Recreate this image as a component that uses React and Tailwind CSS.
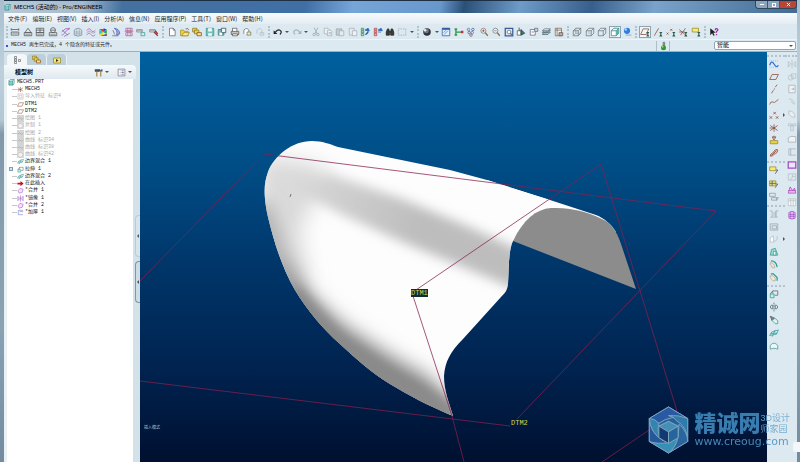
import React from 'react'

const MENUS = [
  '文件(F)', '编辑(E)', '视图(V)', '插入(I)', '分析(A)',
  '信息(N)', '应用程序(P)', '工具(T)', '窗口(W)', '帮助(H)',
]

const K = '#555'
const G = '#b4bec4'
const BR = '#8a4a35'
const PU = '#a04cc8'
const TE = '#2f9c96'
const YE = '#e9d24a'

const sheets = (c) => (
  <>
    <path d="M2 2h6l2 2v7H2z" stroke={c} fill="#eef3f5" />
    <path d="M7 5h5l2 2v7H7z" stroke={c} fill="#eef3f5" />
    <path d="M9 9h4M9 11h4" stroke={c} />
  </>
)
const cube = (fill, c = '#6b7478') => (
  <>
    <path d="M2 6h8v8H2z" stroke={c} fill={fill} />
    <path d="M2 6l4-4h8l-4 4M14 2v8l-4 4" stroke={c} />
  </>
)
const tag = <path d="M10 8h5l-2 3 2 4h-5l2-4z" fill="#2d5a50" />
const magnifier = (
  <>
    <circle cx="7" cy="6" r="4" stroke="#777" fill="#eef5f8" />
    <path d="M10 9l4 5" stroke="#8a6a35" strokeWidth="2" />
  </>
)

const ICONS = {
  ruler: <><path d="M2 2v4M14 2v4M2 4h12M2 8h12v5H2z" stroke={K} /><path d="M5 9v2M8 9v2M11 9v2" stroke={K} /></>,
  angle: <><path d="M8 2L3 9h10zM2 9h12v5H2z" stroke={K} /><path d="M5 11v2M8 11v2M11 11v2" stroke={K} /></>,
  area: <><path d="M2 2h12v7H2zM8 2v7M2 5h12M2 9h12v5H2z" stroke={K} /><path d="M5 11v2M8 11v2M11 11v2" stroke={K} /></>,
  diameter: <><circle cx="8" cy="5" r="4" stroke={K} /><path d="M4 5h8M2 9h12v5H2z" stroke={K} /><path d="M5 11v2M8 11v2M11 11v2" stroke={K} /></>,
  curvature: <><path d="M1 13C6 13 4 7 14 3M1 8l6-5 7-1M5 15l9-5" stroke={PU} /><path d="M2 5l9 8" stroke="#778" /></>,
  mesh: <><path d="M2 5q6-6 12 0v8q-6 3-12 0z" stroke="#78889a" /><path d="M2 8h12M2 11h12M6 3v11M10 3v11" stroke="#9aa6b5" /></>,
  waves: <><path d="M1 6q4-6 7-1t7 0M1 13q4-6 7-1t7 0" stroke="#c05cc0" /><path d="M1 9q4-5 7-1t7 0" stroke="#99a" /></>,
  rainbow: (
    <>
      <path d="M8 8L2 3h7z" fill="#e33" />
      <path d="M8 8l1-6 5 2z" fill="#3a3ae0" />
      <path d="M8 8l6-4v7z" fill="#28a745" />
      <path d="M8 8L2 4v8z" fill="#2ac4d8" />
      <path d="M8 8l-6 5h6z" fill="#e8d22c" />
      <path d="M4 14h10v-3z" fill="#333" />
    </>
  ),
  draft: <><path d="M5 2q6 3 4 11l5-2q0-8-9-9z" stroke="#5560b0" fill="#9fa6e0" /><path d="M2 14h10M3 5l3 7" stroke="#667" /></>,
  section: <><path d="M3 2h10v4H3zM3 9h10v5H3z" stroke="#b455a8" /><path d="M1 7h14M6 2v12M10 2v12" stroke="#a77" /></>,
  layersA: <><path d="M1 4h9v4H1zM1 6h9" stroke="#888" /><path d="M8 9h6v5H8z" stroke={TE} fill="#d9efe8" /></>,
  layersB: <><path d="M1 4h9v4H1zM1 6h9" stroke="#888" /><path d="M8 8l6 6M10 6l4 5" stroke="#9b3030" strokeWidth="2" /></>,
  newFile: <><path d="M4 2h6l3 3v9H4z" stroke="#667" fill="#fff" /><path d="M10 2v3h3" stroke="#667" /></>,
  open: <><path d="M1 5h5l1 2h6v7H1z" stroke="#a58a1c" fill={YE} /><path d="M3 14l3-5h9l-3 5z" stroke="#a58a1c" fill="#f8ec9a" /><path d="M9 3q4-2 5 2" stroke={K} /></>,
  folders: <><path d="M1 2h7v6H1z" stroke="#8f7a20" fill={YE} /><path d="M4 5h7v6H4z" stroke="#8f7a20" fill={YE} /><path d="M8 9h7v5H8z" stroke="#8a4a20" fill="#f3e58b" /></>,
  save: <><path d="M2 2h12v12H2z" stroke="#3d9490" fill="#6fc4bc" /><path d="M5 2h6v5H5zM5 10h6v4H5z" fill="#f4fafa" /></>,
  saveCopy: <><path d="M2 4h9v9H2z" stroke="#3d7480" fill="#7ab9bc" /><path d="M7 2h7v7H7z" stroke="#345" fill="#eef7f7" /><path d="M4 9h4v4H4z" fill="#fff" /></>,
  print: <><path d="M4 7V2h7v5" stroke={K} fill="#fff" /><path d="M2 7h12v5H2z" stroke={K} fill="#c9c4b4" /><path d="M4 11h8v3H4z" stroke={K} fill="#fff" /></>,
  mail: <><path d="M3 11V5q4-5 8 0v6" stroke="#666" fill="#fff" /><path d="M8 8h6v5H8z" stroke="#777" fill="#f5e9b0" /></>,
  mailOff: <><path d="M3 11V5q4-5 8 0v6" stroke={G} /><path d="M8 9h6v4H8z" stroke={G} /></>,
  undo: <><path d="M4 8q5-6 9-1 1 3-2 5" stroke="#222" strokeWidth="2" /><path d="M1 5v6h6z" fill="#222" /></>,
  redo: <><path d="M12 8q-5-6-9-1-1 3 2 5" stroke="#a9b2b8" strokeWidth="2" /><path d="M15 5v6H9z" fill="#a9b2b8" /></>,
  cut: <><path d="M5 1l5 10M11 1L6 11" stroke="#9aa4aa" /><circle cx="5" cy="12" r="2" stroke="#9aa4aa" /><circle cx="11" cy="12" r="2" stroke="#9aa4aa" /></>,
  copy: sheets('#a4adb3'),
  paste: <><path d="M2 3h9v10H2z" stroke="#9aa4aa" fill="#c3ccd1" /><path d="M7 6h7v8H7z" stroke="#a4adb3" fill="#e4ebee" /></>,
  pasteSpecial: <><path d="M2 2h8v11H2z" stroke="#a4adb3" fill="#e4ebee" /><path d="M7 6h7v8H7z" stroke="#a4adb3" fill="#eef3f5" /></>,
  regen: <><path d="M2 2h4v3H2zM2 6h4v3H2zM2 10h4v4H2z" stroke="#3a8d62" fill="#a8dcc0" /><path d="M8 12q6 0 5-6M8 5l5-3 2 4z" stroke="#2a62b5" fill="#2a62b5" /></>,
  regenList: <><path d="M2 2h4v3H2zM2 6h4v3H2zM2 10h4v4H2z" stroke="#b54848" fill="#eab0b0" /><path d="M8 8h5M8 5l5-3 2 4z" stroke="#2a62b5" fill="#2a62b5" /></>,
  find: <><path d="M2 8l2-5h2l1 5v5H2zM9 8l1-5h2l2 5v5H9z" fill="#3a3d33" stroke="#222" /><path d="M7 6h2v3H7z" fill="#222" /></>,
  selectBox: <path d="M2 3h12v10H2z" stroke="#8e989e" strokeDasharray="2 2" />,
  sphere: <><circle cx="8" cy="8" r="6" fill="#2e3338" /><circle cx="7" cy="6" r="4" fill="#70777c" /><circle cx="5" cy="5" r="2" fill="#eceeef" /></>,
  repaint: <><path d="M2 2h12v12H2z" stroke="#2a5ca8" fill="#e7f0fa" /><path d="M5 12l6-6M4 9l4-4" stroke="#4a7cc4" /><path d="M2 3h12" stroke="#2a5ca8" strokeWidth="3" /></>,
  spin: <><path d="M3 3v10M3 8h9" stroke="#3a8a4c" strokeWidth="2" /><path d="M1 2h4v3H1zM1 11h4v3H1z" fill="#31a04c" /><path d="M11 6h4v4h-4z" fill="#c03030" /></>,
  orient: <><circle cx="4" cy="4" r="2" stroke="#667" /><circle cx="11" cy="4" r="2" stroke="#3a60b0" /><circle cx="5" cy="9" r="2" stroke="#3a60b0" /><circle cx="10" cy="9" r="2" stroke="#a55" /><circle cx="8" cy="13" r="2" stroke="#667" /></>,
  zoomIn: <>{magnifier}<path d="M5 6h4M7 4v4" stroke="#a33" /></>,
  zoomOut: <>{magnifier}<path d="M5 6h4" stroke="#777" /></>,
  refit: <><path d="M2 2h12v12H2z" stroke="#3a5c9a" fill="#dde9f7" strokeWidth="2" /><circle cx="8" cy="8" r="3" stroke="#667" fill="#fff" /><path d="M10 10l3 3" stroke="#667" strokeWidth="2" /></>,
  reorient: <><path d="M2 6h6v7H2z" stroke="#456" fill="#fff" /><path d="M8 4l6 6-6 3z" fill="#3b7d5a" stroke="#244" /><path d="M5 1v5" stroke="#333" /></>,
  saved: <><path d="M2 4h8v9H2z" stroke="#667" fill="#fff" /><path d="M9 2h5v5H9zM4 8h4" stroke="#667" fill="#cbd7dc" /></>,
  layers: <><path d="M2 12l4-4h9l-4 4zM2 9l4-4h9l-4 4z" stroke="#567" fill="#9fd8c2" /><path d="M2 6l4-3h9l-4 3z" stroke="#567" fill="#fff" /></>,
  viewMgr: <><path d="M2 2h10v12H2zM5 2v12M2 5h10" stroke="#766b5c" fill="#f3f0e8" /><path d="M8 9h6v5H8z" stroke="#655" fill="#b7b0a0" /></>,
  wire: <>{cube('none')}<path d="M6 2v8h8M6 10l-4 4" stroke="#8b9498" /></>,
  hidden: <>{cube('none')}<path d="M6 6v4h4" stroke="#aab3b7" /></>,
  noHidden: cube('none'),
  shaded: <>{cube('#fff', '#357f7c')}<path d="M10 6l4-4v8l-4 4z" fill="#4fb5a8" /></>,
  realism: <><circle cx="8" cy="6" r="5" fill="#2f7ee0" /><circle cx="6" cy="4" r="2" fill="#a9d2ff" /><path d="M6 13h9" stroke="#9ab8cf" strokeWidth="2" /></>,
  planeOn: <><path d="M1 12L5 3h9l-4 9z" stroke={BR} />{tag}</>,
  axisOn: <><path d="M2 14l7-12" stroke={BR} />{tag}</>,
  pointOn: <><path d="M1 9l3 3M4 9l-3 3M7 3l3 3M10 3L7 6" stroke={BR} />{tag}</>,
  csysOn: <><path d="M2 4l9 8M12 2L4 13M2 8h9" stroke={BR} />{tag}</>,
  noteOn: <><path d="M2 2h10v6H2z" stroke="#9a8a28" fill="#f5ec70" />{tag}</>,
  help: <><path d="M2 2v11l3-3 2 4 2-1-2-4h4z" fill="#222" /><path d="M10 5q0-3 3-2 3 2-1 4v2M12 11v2" stroke="#9a30a0" strokeWidth="2" /></>,
  sketch: <><path d="M1 10q3-9 7-2t7 2" stroke="#2f72d0" strokeWidth="2" /><path d="M1 3h14M1 13h14" stroke="#5a8fd8" strokeDasharray="1 2" /></>,
  plane: <path d="M1 12L5 4h10l-4 8z" stroke={BR} />,
  axis: <path d="M4 15l3-5M8 9l1-2M10 5l3-4" stroke={BR} />,
  curve: <path d="M1 12q2-6 5-4t5-1l4-3" stroke={BR} />,
  points: <path d="M1 10l4 4M5 10l-4 4M7 3l4 4M11 3L7 7M11 10l4 4M15 10l-4 4" stroke={BR} />,
  csys: <path d="M8 2v12M2 4l12 8M14 4L2 12M1 8h9" stroke={BR} />,
  analysis: <><path d="M8 1v4M5 3l3 5 3-5z" stroke={BR} /><path d="M2 9h12v5H2z" stroke="#99851f" fill={YE} /></>,
  graph: <><path d="M2 13q0-4 4-5 3-6 7-6 2 1 0 5-2 2-5 3-2 4-6 3z" stroke={BR} fill="#e6c9a8" /><path d="M4 12l8-8" stroke={BR} /></>,
  note: <><path d="M1 3h10v6H1z" stroke="#9a8a28" fill="#f5ec70" /><path d="M11 8h3l-4 6" stroke="#444" /></>,
  noteMesh: <><path d="M1 3h10v8H1z" stroke="#9a8a28" fill="#e3dc86" /><path d="M1 7h10M5 3v8M11 8h3l-4 6" stroke="#555" /></>,
  noteOff: <><path d="M1 2h9v5H1zM4 9h8v4H4z" stroke="#909a9f" /><path d="M12 9h3l-3 5" stroke="#909a9f" /></>,
  hole: <path d="M1 3h4v10H2M15 3h-4v10h3M5 13h6V3M8 5v6" stroke="#a4adb3" />,
  shell: <path d="M2 3h12v10H2zM5 6h7v5H5z" stroke="#9aa4aa" />,
  rib: <><path d="M2 6l5-3v10H2z" stroke={G} fill="#fff" /><path d="M7 13l6-4V3" stroke={G} /></>,
  draftT: <><path d="M2 13l2-9 6-2 4 11z" stroke={TE} fill="#9bd9cf" /><path d="M7 7h4v6H7z" stroke={TE} fill="#fff" /></>,
  round: <><path d="M3 3q9 0 10 10" stroke={TE} strokeWidth="2" /><path d="M2 6q7 0 7 8H5q0-5-3-5z" stroke="#b0a890" fill="#f2ead0" /></>,
  chamfer: <><path d="M3 3h4l6 6v5" stroke={TE} strokeWidth="2" /><path d="M2 6h4l4 4v4H6l-4-5z" stroke="#b0a890" fill="#f2ead0" /></>,
  extrude: <><path d="M2 8h6v6H2z" stroke={TE} fill="#c9ede5" /><path d="M6 7V3h8v7h-5M2 8l4-5" stroke="#5d676b" /></>,
  revolve: <><path d="M8 1v14" stroke="#556" strokeDasharray="3 1" /><path d="M2 8q1-4 4-3v6q-3 1-4-3zM14 8q-1-4-4-3v6q3 1 4-3z" stroke="#456f6d" /></>,
  sweep: <><path d="M2 2l3 7 4-4z" stroke="#555" fill="#888" /><path d="M5 9l5 5h4V9L9 5z" stroke={TE} fill="#dff2ee" /></>,
  blend: <><path d="M1 12q3-8 8-7l6-2-3 7-6 1z" stroke={TE} /><path d="M5 14l5-11M3 9l10-1" stroke={TE} /></>,
  style: <path d="M2 13V7q6-7 12 0v6q-6-3-12 0z" stroke="#4d9490" fill="#edf8f6" />,
  mirror: <path d="M8 1v14M2 4l4 4-4 5zM14 4l-4 4 4 5z" stroke={G} />,
  merge: <><circle cx="6" cy="9" r="4" stroke={G} /><path d="M7 3h7v7H7z" stroke={G} /></>,
  trim: <path d="M3 2h10v12H3zM7 8h5M10 6v4" stroke="#a4adb3" fill="#eef3f5" />,
  extend: <path d="M3 3q8 0 9 9M6 6l4 5" stroke={G} />,
  offset: <path d="M3 3q9 0 10 10M3 3v6l5 4h5" stroke={G} fill="#e9eff1" />,
  pattern: <path d="M2 3h5v3H2zM9 3h5v3H9zM6 6h4v8H6z" stroke={G} />,
  project: <path d="M2 13V6l4-2h8v9z" stroke="#a4adb3" fill="#eef3f5" />,
  wrap: <path d="M14 3H3v10h11M6 3v10" stroke="#a4adb3" />,
  thicken: <path d="M2 3h12v10H2z" stroke={PU} strokeWidth="2" fill="#f1e3f8" />,
  solidify: <path d="M2 3h12v10H2zM6 13q0-6 7-6M9 4v4" stroke={G} />,
  warp: <path d="M2 13l3-10 4 6 3-4 2 8zM2 9h12" stroke="#b03cc0" fill="#ecc7f2" />,
  table: <path d="M2 3h12v11H2zM2 6h12M6 3v11M10 3v11" stroke="#b8c1c5" fill="#f5f7f6" />,
  cylinder: <><path d="M3 4q5-4 10 0v9q-5 3-10 0z" stroke={PU} fill="#efd6f6" /><path d="M3 7h10M3 10h10M6 3v11M10 3v11" stroke={PU} /></>,
  part: <><path d="M2 4h9v10H2z" stroke="#2c6f6d" fill="#6fd6d0" /><path d="M2 4l3-3h9l-3 3M14 1v9l-3 4" stroke="#2c6f6d" fill="#bdeeea" /></>,
  imported: <path d="M2 2h12v12H2zM5 5h6v6H5z" stroke="#b9b0a6" />,
  greyCurve: <><path d="M0 0h16v16H0z" fill="#d4d4d4" /><path d="M2 10q3-6 6-2t6-1" stroke="#999" /></>,
  greyCopy: <><path d="M0 0h16v16H0z" fill="#dcdcdc" /><path d="M2 10q-1-7 6-7 7 1 6 7l-5 4H5z" stroke="#aaa" fill="#f2f2f2" /></>,
  insertHere: <path d="M1 6h7V2l7 6-7 6v-4H1z" fill="#c01020" />,
  purpleMerge: <path d="M2 9l5-6 7 2-2 7-7 2z" stroke={PU} fill="#f3e2f9" />,
  purpleMirror: <path d="M8 1v14M2 3l5 5-5 5zM14 3L9 8l5 5z" stroke={PU} fill="#f3e2f9" />,
  blueThicken: <path d="M14 3H3v10h11M6 6h8" stroke="#6a68c4" />,
  treeTab: <><path d="M3 1h4v4H3zM3 6h4v4H3zM3 11h4v4H3z" stroke="#555" /><path d="M11 7h4v4h-4z" stroke="#555" /></>,
  favorites: <><path d="M1 4h14v10H1z" stroke="#8a7820" fill="#f3e67a" /><path d="M6 6v6l5-3z" fill="#333" /></>,
  hammer: <><path d="M2 3h7v3H2z" fill="#445a78" stroke="#334" /><path d="M5 6v9M12 6v9" stroke="#a5803a" strokeWidth="2" /><path d="M10 2v3h4V2" stroke="#445" strokeWidth="2" /></>,
  list: <><path d="M2 2h12v12H2z" stroke="#667" fill="#fff" /><path d="M5 5h1M8 5h4M5 8h1M8 8h4M5 11h1M8 11h4" stroke="#447" /></>,
}

function Icon({ name, className = 'size-[10px]' }) {
  return (
    <svg viewBox="0 0 16 16" fill="none" strokeWidth="1.200" className={`block shrink-0 ${className}`} aria-hidden="true">
      {ICONS[name]}
    </svg>
  )
}

function ToolButton({ name, active = false }) {
  return (
    <button
      type="button"
      aria-label={name}
      className={`flex size-[10px] shrink-0 items-center justify-center ${
        active ? 'bg-[#eef6fa] outline outline-[#8fa3b0]' : ''
      }`}
    >
      <Icon name={name} />
    </button>
  )
}

function Arrow() {
  return <span className="h-0 w-0 shrink-0 border-x-2 border-t-2 border-x-transparent border-t-[#4a5358]" />
}

function Grip({ className = 'w-2' }) {
  return (
    <span className={`flex shrink-0 justify-center ${className}`}>
      <span className="h-3 border-l-2 border-dotted border-[#b3c3cd]" />
    </span>
  )
}

function ToolGroup({ items, className }) {
  return (
    <div className={`flex shrink-0 items-center justify-between ${className}`}>
      {items.map((item, i) =>
        item === '>' ? (
          <span key={i} className="flex w-1 justify-center"><Arrow /></span>
        ) : (
          <ToolButton key={i} name={item} active={item === 'shaded' || item === 'planeOn'} />
        )
      )}
    </div>
  )
}

const GROUPS = [
  { width: 'w-[149px]', items: ['ruler', 'angle', 'area', 'diameter', 'curvature', 'mesh', 'waves', 'rainbow', 'draft', 'section', 'layersA', 'layersB'] },
  { width: 'w-[98px]', items: ['newFile', 'open', 'folders', 'save', 'saveCopy', 'print', 'mail', 'mailOff'] },
  { width: 'w-[141px]', items: ['undo', '>', 'redo', '>', 'cut', 'copy', 'paste', 'pasteSpecial', 'regen', 'regenList', 'find', 'selectBox', '>'] },
  { width: 'w-[142px]', items: ['sphere', '>', 'repaint', 'spin', 'orient', 'zoomIn', 'zoomOut', 'refit', 'reorient', 'saved', 'layers', 'viewMgr'] },
  { width: 'w-[60px]', items: ['wire', 'hidden', 'noHidden', 'shaded', 'realism'] },
  { width: 'w-[61px]', items: ['planeOn', 'axisOn', 'pointOn', 'csysOn', 'noteOn'] },
  { width: 'w-[10px]', items: ['help'] },
]

const TREE = [
  ['csys', 'MECH5'],
  ['imported', '导入特征 标识4', true],
  ['plane', 'DTM1'],
  ['plane', 'DTM2'],
  ['greyCurve', '绘图 1', true],
  ['greyCopy', '复制 1', true],
  ['greyCurve', '绘图 2', true],
  ['greyCurve', '曲线 标识34', true],
  ['greyCurve', '曲线 标识38', true],
  ['greyCopy', '曲线 标识42', true],
  ['blend', '边界混合 1'],
  ['extrude', '拉伸 1'],
  ['blend', '边界混合 2'],
  ['insertHere', '在此插入'],
  ['purpleMerge', '*合并 1'],
  ['purpleMirror', '*镜像 1'],
  ['purpleMerge', '*合并 2'],
  ['blueThicken', '*加厚 1'],
]

const SIDE_A = [
  ['sketch', 'plane', 'axis', 'curve', 'points', 'csys', 'analysis', 'graph'],
  ['note', 'noteMesh', 'noteOff'],
  ['hole', 'shell', 'rib', 'draftT', 'round', 'chamfer'],
  ['extrude', 'revolve', 'sweep', 'blend', 'style'],
]
const SIDE_A_HEIGHTS = ['h-[99px]', 'h-[37px]', 'h-[73px]', 'h-[62px]']
const SIDE_B = ['mirror', 'merge', 'trim', 'extend', 'offset', 'pattern', 'project', 'wrap', 'thicken', 'solidify', 'warp', 'table', 'cylinder']

function TitleBar() {
  return (
    <header className="flex h-[13px] shrink-0 items-start justify-between border-t border-[#1d2f45] bg-[linear-gradient(100deg,#b9cbd9_0%,#a4bace_10%,#44719f_15%,#406fa5_38%,#76a5d8_44%,#6797cb_55%,#2b5078_58%,#6e9bc8_65%,#385f8c_74%,#79a3ca_82%,#426a92_100%)]">
      <div className="flex items-center gap-[3px] pt-px">
        <Icon name="part" className="size-[7px]" />
        <h1 className="whitespace-nowrap font-['Roboto','Noto_Sans_CJK_SC',sans-serif] text-[6px] leading-[10px] text-black">
          MECH5 (活动的) - Pro/ENGINEER
        </h1>
      </div>
      <div className="flex h-2 overflow-hidden rounded-b-sm border border-t-0 border-[#30465e] text-white">
        <button type="button" aria-label="最小化" className="flex w-3 items-center justify-center border-r border-[#40566e] bg-[#8ca6bd]">
          <span className="h-px w-1 bg-white" />
        </button>
        <button type="button" aria-label="还原" className="flex w-3 items-center justify-center border-r border-[#40566e] bg-[#8ca6bd]">
          <span className="size-1 border border-white" />
        </button>
        <button type="button" aria-label="关闭" className="flex w-4 items-center justify-center bg-[#bd4433]">
          <svg viewBox="0 0 6 6" className="size-[5px]" stroke="white" strokeWidth="1"><path d="M1 1l4 4M5 1L1 5" /></svg>
        </button>
      </div>
    </header>
  )
}

function SashHandle({ className }) {
  return (
    <button
      type="button"
      aria-label="折叠"
      className={`ml-[2px] flex h-[42px] items-center justify-center rounded-l-sm border border-r-0 ${className}`}
    >
      <span className="h-0 w-0 border-y-2 border-r-2 border-y-transparent border-r-[#44525c]" />
    </button>
  )
}

function ModelTree() {
  return (
    <aside className="flex w-[136px] shrink-0 flex-col bg-[#d3e1e9]">
      <div className="flex h-[13px] items-end pl-[3px] pt-[2px]" role="tablist">
        <button type="button" role="tab" aria-selected="true" aria-label="模型树" className="flex h-full w-5 items-center justify-center rounded-t-sm bg-[#f3f7f9]">
          <Icon name="treeTab" className="size-2" />
        </button>
        <button type="button" role="tab" aria-label="文件夹" className="flex h-full w-5 items-center justify-center rounded-t-sm border-r border-[#eaf2f6] bg-[#bccfda]">
          <Icon name="folders" className="size-[9px]" />
        </button>
        <button type="button" role="tab" aria-label="收藏夹" className="flex h-full w-5 items-center justify-center rounded-t-sm border-r border-[#eaf2f6] bg-[#bccfda]">
          <Icon name="favorites" className="size-2" />
        </button>
      </div>
      <div className="mr-1 flex h-[14px] shrink-0 items-center rounded-tr-sm bg-linear-to-b from-[#f5f9fb] to-[#dfe9ef] pl-[11px] pr-[4px]">
        <h2 className="flex-1 text-[6px] font-bold leading-none">模型树</h2>
        <button type="button" aria-label="设置" className="mr-2 flex items-center gap-[2px]">
          <Icon name="hammer" className="size-[9px]" />
          <Arrow />
        </button>
        <button type="button" aria-label="显示" className="flex items-center gap-[2px]">
          <Icon name="list" className="size-[9px]" />
          <Arrow />
        </button>
      </div>
      <div className="flex min-h-0 flex-1">
        <div className="flex-1 border-l-[3px] border-[#e9f1f5] bg-white">
          <ul className="flex h-[137px] flex-col justify-between font-['Liberation_Mono','Noto_Sans_CJK_SC',monospace] text-[5px] leading-[7px] text-[#111]">
            <li className="flex h-[7px] items-center gap-[2px] whitespace-nowrap pl-px">
              <Icon name="part" className="size-[7px]" />
              MECH5.PRT
            </li>
            {TREE.map(([icon, label, muted], i) => (
              <li key={i} className={`flex h-[7px] items-center whitespace-nowrap pl-[2px] ${muted ? 'text-[#a9a9a9]' : ''}`}>
                <span className="flex w-2 items-center">
                  {label === '拉伸 1' ? (
                    <span className="size-[4px] border border-[#7a9cb8] bg-[#d5e6f2]" />
                  ) : (
                    <span className="ml-[3px] h-px flex-1 bg-[#c8c8c8]" />
                  )}
                </span>
                <Icon name={icon} className="mr-px size-[7px]" />
                {label}
              </li>
            ))}
          </ul>
        </div>
        <div className="flex w-[7px] flex-col gap-1 pt-[136px]">
          <SashHandle className="border-[#b9cbd6] bg-[#d6e4ec]" />
          <SashHandle className="border-[#8196a5] bg-[#cddde6]" />
        </div>
      </div>
    </aside>
  )
}

const BODY =
  'M312 141C322 141 330 144 338 147L450 170L487 180L550 200C530 208 518 228 513 241C508 252 509 270 508 284C507 291 505 293 501 297L463 339C450 352 445 362 444 376C444 391 449 402 453 416C429 406 408 395 390 384C372 373 356 359 340 344C321 327 308 311 295 290C281 266 273 238 268 217C263 194 264 183 268 172C274 156 292 141 312 141Z'

function Viewport() {
  return (
    <main className="min-w-0 flex-1 bg-[linear-gradient(180deg,#00609e_0%,#004d86_28%,#00366a_52%,#002451_76%,#001030_100%)]">
      <svg viewBox="140 52 627 410" preserveAspectRatio="xMidYMid slice" className="block h-full w-full">
        <defs>
          <clipPath id="body"><path d={BODY} /></clipPath>
          <filter id="soft" x="-30%" y="-30%" width="160%" height="160%"><feGaussianBlur stdDeviation="6" /></filter>
          <filter id="wide" x="-30%" y="-30%" width="160%" height="160%"><feGaussianBlur stdDeviation="10" /></filter>
          <linearGradient id="fade" x1="280" y1="185" x2="420" y2="225" gradientUnits="userSpaceOnUse">
            <stop offset="0" stopColor="#dcdcdc" />
            <stop offset="1" stopColor="#bdbdbd" />
          </linearGradient>
        </defs>
        <path d="M487 180L550 200L596 215C604 218 612 225 616 232L560 214L513 241L500 220Z" fill="#fdfdfd" />
        <path d="M513 241C523 220 536 209 551 208C572 207 592 213 606 221C614 227 618 235 621 244L636 289Z" fill="#8c8c8c" />
        <path d={BODY} fill="#fdfdfd" />
        <g clipPath="url(#body)">
          <path d="M255 160L285 158L330 168L300 230L310 290L280 290Z" fill="#dadada" filter="url(#wide)" />
          <path d="M280 183L330 174L400 198L465 225L520 250L520 291L465 268L400 241L345 216Z" fill="url(#fade)" filter="url(#soft)" />
          <path d="M250 200L266 205L281 255L304 290L342 325L388 355L428 378L448 400L462 430L380 415L300 345Z" fill="#808080" filter="url(#wide)" />
          <path d="M290 292C310 318 325 335 342 349L394 385L455 416" stroke="#8b8b8b" strokeWidth="22" fill="none" filter="url(#soft)" />
        </g>
        <path d="M291 194l-1 3" stroke="#777" />
        <g fill="none" stroke="#85204f" strokeWidth="1" strokeOpacity=".75">
          <path d="M140 281L264 154L716 211L517 419" />
          <path d="M413 292L601 164L677 411L602 462" />
          <path d="M413 296L452 416L464 462" />
          <path d="M140 381L510 426" />
        </g>
        <path d="M411 289h17v8h-17z" fill="#0b2d3c" />
        <g className="font-['Liberation_Mono',monospace] text-[7px]" fill="#d3d84a">
          <text x="411" y="295">DTM1</text>
          <text x="511" y="425">DTM2</text>
        </g>
        <text x="144" y="429" fill="#b9c3cc" className="font-['Noto_Sans_CJK_SC',sans-serif] text-[4px]">插入模式</text>
      </svg>
    </main>
  )
}

function SideTools() {
  return (
    <aside className="flex w-[30px] shrink-0 justify-between bg-[#dce9f1] pt-[3px]">
      <div className="flex w-[18px] flex-col gap-[3px]">
        {SIDE_A.map((group, i) => (
          <div key={i} className="flex flex-col gap-[2px]">
            <span className="border-t-2 border-dotted border-[#b3c3cd]" />
            <div className={`flex flex-col justify-between pl-[2px] ${SIDE_A_HEIGHTS[i]}`}>
              {group.map((name, j) => (
                <div key={j} className="flex items-center gap-1">
                  <ToolButton name={name} />
                  {name === 'points' || name === 'rib' ? (
                    <span className="h-0 w-0 border-y-2 border-l-2 border-y-transparent border-l-[#4a5358]" />
                  ) : null}
                </div>
              ))}
            </div>
          </div>
        ))}
      </div>
      <div className="flex h-[165px] w-3 flex-col items-end justify-between border-t-2 border-dotted border-[#b3c3cd] pt-[2px]">
        {SIDE_B.map((name) => <ToolButton key={name} name={name} />)}
      </div>
    </aside>
  )
}

function Watermark() {
  return (
    <div className="pointer-events-none absolute bottom-2 right-[10px] flex items-center gap-1 text-[#3f88bd] opacity-90">
      <svg viewBox="0 0 44 50" className="h-[48px] w-[43px]" fill="none" stroke="#8bb3cc">
        <path d="M22 1l20 12v24L22 49 2 37V13z" fill="#2a6aa8" />
        <path d="M22 1l20 12Q24 9 12 18L2 13z" fill="#2c62ad" />
        <path d="M42 13v24Q42 22 30 15 28 11 22 10q10-1 20 3z" fill="#3487b8" />
        <path d="M42 37L22 49q11-9 11-30 9 8 9 18z" fill="#2d6fa9" />
        <path d="M22 49L2 37q16 3 30-5-2 11-10 17z" fill="#3f9dc4" />
        <path d="M2 37V13q1 14 13 22 4 3 8 3-12 2-21-1z" fill="#2a5fa5" />
        <path d="M2 13q6 0 10 5-3 12 4 18Q3 28 2 13z" fill="#3a90bd" />
        <path d="M22 16l10 5v12l-10 6-10-6V21z" fill="#153f76" />
        <path d="M22 16l10 5-10 6-10-6z" fill="#4d9cc4" />
        <path d="M22 27v12M32 21v12l-10 6V27z" fill="#2b6da9" />
      </svg>
      <div className="font-['Liberation_Sans','Noto_Sans_CJK_SC',sans-serif]">
        <div className="flex items-center">
          <strong className="text-[22px] font-black leading-[22px]">精诚网</strong>
          <span className="text-[9px] leading-[11px] text-[#6ea9cf]">3D设计<br />师家园</span>
        </div>
        <div className="font-['DejaVu_Sans',sans-serif] text-[11px] leading-[13px] text-[#4f93c0]">www.creoug.com</div>
      </div>
    </div>
  )
}

export default function App() {
  return (
    <div className="relative flex h-screen min-h-[400px] w-full flex-col overflow-hidden bg-[linear-gradient(180deg,#a9bfce_0%,#bdd0dc_15%,#b3c7d4_26%,#8299ab_29%,#8aa2b4_70%,#728b9f_100%)] font-['Liberation_Sans','Noto_Sans_CJK_SC',sans-serif] text-black">
      <div className="ml-1 mr-[3px] flex min-h-0 flex-1 flex-col bg-[#dce9f1]">
        <TitleBar />
        <nav className="flex h-[11px] shrink-0 items-center gap-[5px] bg-linear-to-b from-[#f6fafc] to-[#e4edf3] pl-1">
          {MENUS.map((menu) => (
            <button key={menu} type="button" className="whitespace-nowrap font-['Noto_Sans_CJK_SC',sans-serif] text-[6px] leading-none text-[#222]">
              {menu}
            </button>
          ))}
        </nav>
        <div className="flex h-4 shrink-0 items-center border-b border-[#eef5f9]">
          {GROUPS.map((group, i) => (
            <React.Fragment key={i}>
              <Grip className={i === 0 ? 'w-[6px]' : 'w-2'} />
              <ToolGroup items={group.items} className={group.width} />
            </React.Fragment>
          ))}
        </div>
        <div className="flex h-3 shrink-0 items-center justify-between border-b border-[#6ec0e6] pl-[2px]">
          <p className="flex items-center gap-[3px] whitespace-nowrap font-['Liberation_Mono','Noto_Sans_CJK_SC',monospace] text-[5px] leading-none text-[#222]">
            <span className="size-[2px] rounded-full bg-[#1018d0]" />
            MECH5 再生已完成，4 个隐含的特征或元件。
          </p>
          <div className="flex items-center">
            <span className="mr-[44px] flex h-[10px] w-[14px] items-center justify-center border-x border-[#aebfca]">
              <svg viewBox="0 0 8 12" className="h-[10px] w-[7px]">
                <path d="M3 1h3v5H3z" fill="#888" />
                <circle cx="4" cy="8" r="3" fill="#2e9a2c" />
                <circle cx="3" cy="7" r="1" fill="#a8e58c" />
              </svg>
            </span>
            <div className="relative mr-px flex">
              <select aria-label="选取过滤器" className="h-[9px] w-[82px] appearance-none rounded-xs border border-[#8fa5b3] bg-white pl-[2px] text-[6px] leading-[7px]">
                <option>智能</option>
              </select>
              <span className="pointer-events-none absolute right-[3px] top-[3px]"><Arrow /></span>
            </div>
          </div>
        </div>
        <div className="flex min-h-0 flex-1">
          <ModelTree />
          <Viewport />
          <SideTools />
        </div>
      </div>
      <Watermark />
      <span className="absolute bottom-[10px] right-0 h-[10px] w-[7px] rounded-l-xs bg-[#f4f7f9]" />
    </div>
  )
}
